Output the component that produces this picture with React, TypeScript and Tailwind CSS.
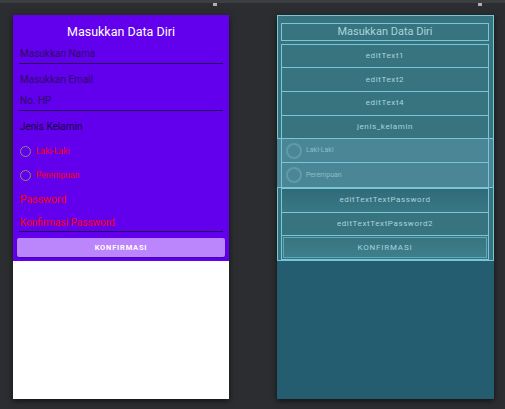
import React from "react";

const rowBp = "h-[25px] border border-[#78c6d8] flex items-center justify-center text-[8px] text-[#a8d4de] tracking-[0.6px] -mt-px";

export default function App() {
  return (
    <div className="w-[505px] h-[409px] bg-[#2b2d30] overflow-hidden relative" style={{ fontFamily: "Roboto, 'Liberation Sans', sans-serif" }}>
      <div className="h-[3px] bg-[#3c3f41]" />
      <div className="absolute left-[213px] top-[3px] w-[4px] h-[3px] bg-[#b0b0b0]" />
      <div className="absolute left-[478px] top-[3px] w-[4px] h-[3px] bg-[#b0b0b0]" />
      <div className="flex pl-[13px] pt-[12px] gap-[48px]">
        {/* Left phone */}
        <div className="w-[216px] h-[384px] bg-white flex flex-col shadow-[0_2px_6px_rgba(0,0,0,0.6)]">
          <div className="h-[246px] bg-[#6200ee] flex flex-col px-[6px] pt-[8px]">
            <div className="h-[18px] flex items-center justify-center text-white text-[12.5px] leading-none mb-[3px]">Masukkan Data Diri</div>
            <div className="h-[24px] flex flex-col justify-end">
              <div className="text-[10px] leading-none text-[#2c0d63] pl-px pb-[4px]">Masukkan Nama</div>
              <div className="h-px bg-[#240a55] mb-[4px]" />
            </div>
            <div className="h-[23px] flex items-center text-[10px] leading-none text-[#2c0d63] pl-px">Masukkan Email</div>
            <div className="h-[24px] flex flex-col justify-end">
              <div className="text-[10px] leading-none text-[#2c0d63] pl-px pb-[4px]">No. HP</div>
              <div className="h-px bg-[#240a55] mb-[4px]" />
            </div>
            <div className="h-[24px] flex items-center text-[10px] leading-none text-[#14063a] pl-px">Jenis Kelamin</div>
            <div className="h-[24px] flex items-center gap-[5px] pl-px">
              <div className="w-[11px] h-[11px] rounded-full border-[1.5px] border-[#8c8a70]" />
              <span className="text-[8.5px] text-[#ff0000] leading-none">Laki-Laki</span>
            </div>
            <div className="h-[25px] flex items-center gap-[5px] pl-px">
              <div className="w-[11px] h-[11px] rounded-full border-[1.5px] border-[#8c8a70]" />
              <span className="text-[8.5px] text-[#ff0000] leading-none">Perempuan</span>
            </div>
            <div className="h-[24px] flex items-center text-[10.5px] leading-none text-[#ff0000] pl-px">Password</div>
            <div className="h-[24px] flex flex-col justify-end">
              <div className="text-[10px] leading-none text-[#ff0000] pl-px pb-[3px]">Konfirmasi Password</div>
              <div className="h-px bg-[#240a55] mb-[4px]" />
            </div>
            <div className="-mx-[2px] mt-[2px] h-[19px] bg-[#bb86fc] rounded-[2px] flex items-center justify-center text-white text-[7.5px] font-bold tracking-[0.8px] shadow-[0_1px_2px_rgba(0,0,0,0.3)]">KONFIRMASI</div>
          </div>
          <div className="flex-1 bg-white" />
        </div>
        {/* Right blueprint */}
        <div className="w-[217px] h-[384px] bg-[#245d70] flex flex-col shadow-[0_2px_6px_rgba(0,0,0,0.6)]">
          <div className="h-[246px] bg-[#37747f] border border-[#78c6d8] flex flex-col pl-[3px] pr-[4px] pt-[7px]">
            <div className="h-[18px] border border-[#78c6d8] flex items-center justify-center text-[11px] text-[#a8d4de] leading-none mb-[3px]">Masukkan Data Diri</div>
            <div className={rowBp + " mt-0"}>editText1</div>
            <div className={rowBp}>editText2</div>
            <div className={rowBp}>editText4</div>
            <div className={rowBp}>jenis_kelamin</div>
            <div className="-mx-[4px] -mt-px border-y border-[#78c6d8] bg-[#4a8696] px-[4px]">
              <div className="h-[24px] border-x border-b border-[#78c6d8] flex items-center gap-[4px] pl-[4px] text-[7px] text-[#8dbdc8]">
                <div className="w-[16px] h-[16px] rounded-full border-2 border-[#5d9cab]" />
                Laki-Laki
              </div>
              <div className="h-[24px] border-x border-[#78c6d8] flex items-center gap-[4px] pl-[4px] text-[7px] text-[#8dbdc8]">
                <div className="w-[16px] h-[16px] rounded-full border-2 border-[#5d9cab]" />
                Perempuan
              </div>
            </div>
            <div className={rowBp + " bg-gradient-to-b from-[#2f6a78] to-[#3a7885] mt-0"}>editTextTextPassword</div>
            <div className={rowBp}>editTextTextPassword2</div>
            <div className="h-[25px] border border-[#78c6d8] -mt-px p-px">
              <div className="h-full border border-[#5ea7b8] bg-gradient-to-b from-[#37747f] to-[#3e7f8c] flex items-center justify-center text-[8px] text-[#a8d4de] tracking-[0.8px]">KONFIRMASI</div>
            </div>
          </div>
          <div className="flex-1" />
        </div>
      </div>
    </div>
  );
}
